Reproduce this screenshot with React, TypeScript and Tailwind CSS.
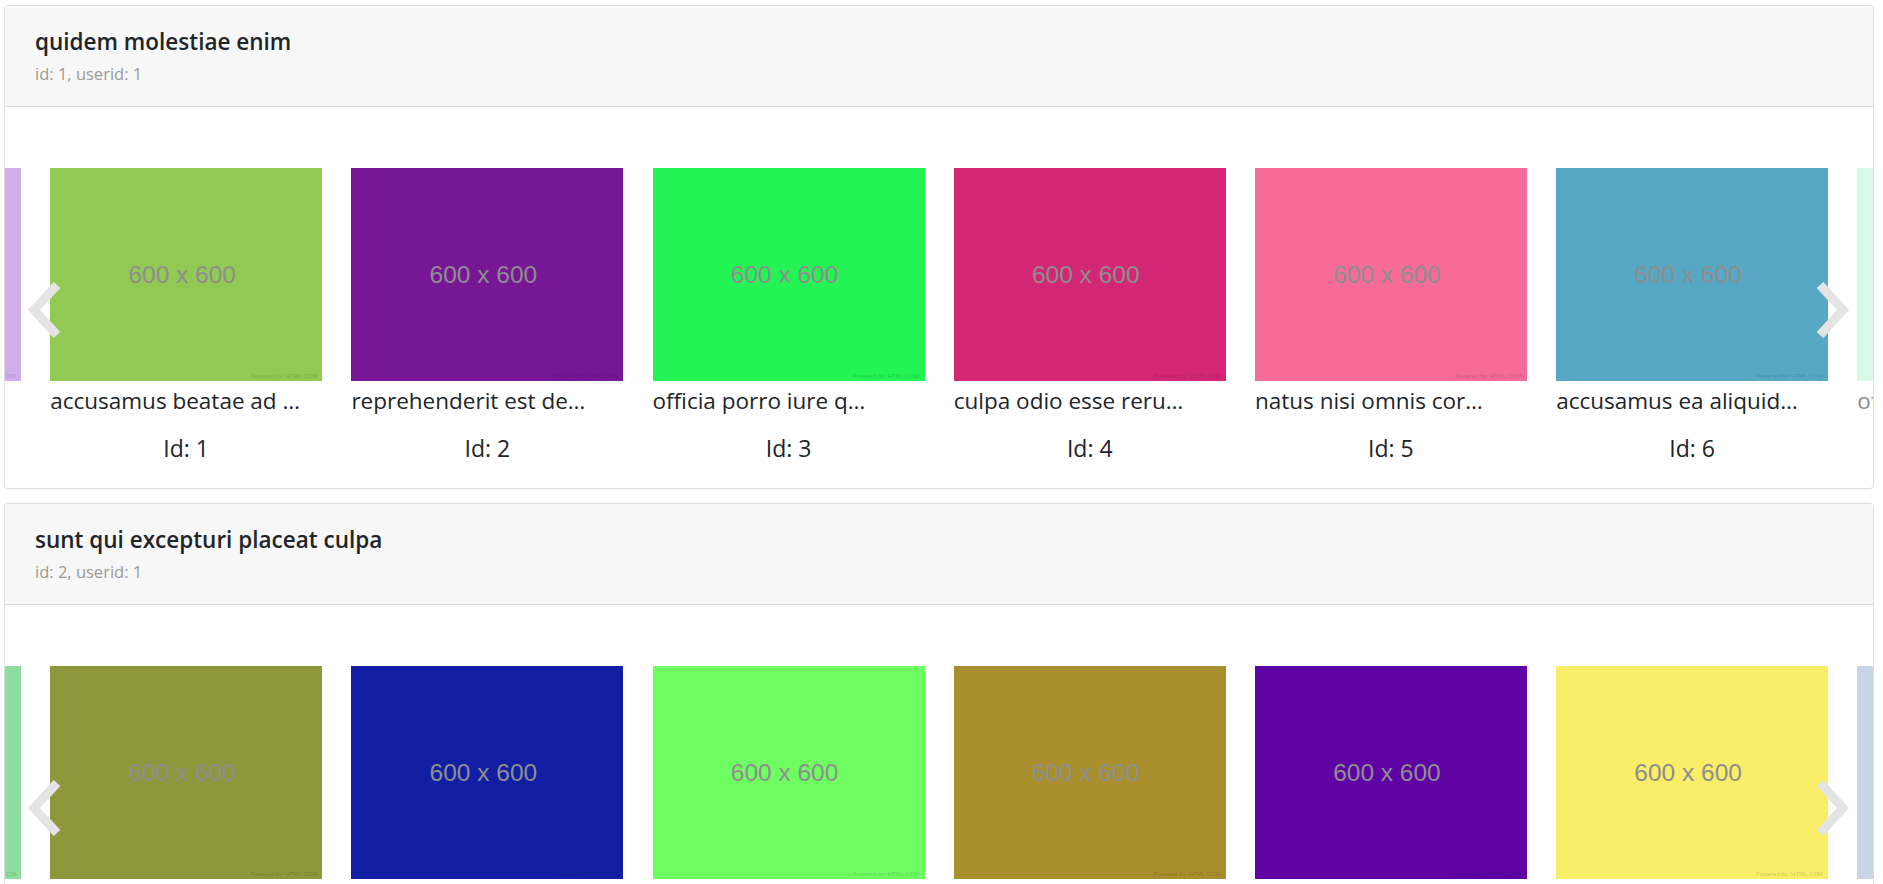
import React from 'react';

interface Slide {
    id: number;
    color: string;
    title: string;
    partial?: boolean;
}

interface Album {
    id: number;
    userId: number;
    title: string;
    slides: Slide[];
}

const albums: Album[] = [
    {
        id: 1,
        userId: 1,
        title: 'quidem molestiae enim',
        slides: [
            { id: 50, color: '#cfaeea', title: 'et inventore quae ut…', partial: true },
            { id: 1, color: '#92c952', title: 'accusamus beatae ad …' },
            { id: 2, color: '#771796', title: 'reprehenderit est de…' },
            { id: 3, color: '#24f355', title: 'officia porro iure q…' },
            { id: 4, color: '#d32776', title: 'culpa odio esse reru…' },
            { id: 5, color: '#f66b97', title: 'natus nisi omnis cor…' },
            { id: 6, color: '#56a8c5', title: 'accusamus ea aliquid…' },
            { id: 7, color: '#d9f9e6', title: 'officia delectus co…', partial: true },
        ],
    },
    {
        id: 2,
        userId: 1,
        title: 'sunt qui excepturi placeat culpa',
        slides: [
            { id: 100, color: '#8cdd9e', title: 'in quasi nam ut quos…', partial: true },
            { id: 51, color: '#8e973b', title: 'non sunt voluptatem …' },
            { id: 52, color: '#121fa4', title: 'eveniet pariatur qui…' },
            { id: 53, color: '#6efe62', title: 'soluta et harum aliq…' },
            { id: 54, color: '#a98e2e', title: 'ut ex quibusdam dign…' },
            { id: 55, color: '#5f03a5', title: 'voluptatem consequat…' },
            { id: 56, color: '#f8ee68', title: 'eos ab consequuntur …' },
            { id: 57, color: '#c9d5e6', title: 'qui quae sed quidem …', partial: true },
        ],
    },
];

function Chevron({ dir }: { dir: 'left' | 'right' }) {
    const pts = dir === 'left' ? '32,3 9,28 32,53' : '4,3 27,28 4,53';
    return (
        <svg width="36" height="56" viewBox="0 0 36 56">
            <polyline points={pts} fill="none" stroke="#e4e4e4" strokeWidth="9" />
        </svg>
    );
}

function SlideItem({ slide }: { slide: Slide }) {
    return (
        <div className="w-[272px] shrink-0">
            <div className="relative h-[213px] flex items-center justify-center pr-[8px] pt-[2px]" style={{ backgroundColor: slide.color }}>
                <span className="text-[24.5px] text-[#8e8e8e] font-['Liberation_Sans',Arial,sans-serif]">600 x 600</span>
                <span className="absolute right-[5px] bottom-[2px] text-[6px] leading-none text-black/20 font-['Liberation_Sans',Arial,sans-serif]">
                    Powered by: HTML.COM
                </span>
            </div>
            <p className={`mt-[5px] text-[22.5px] leading-[30px] whitespace-nowrap ${slide.partial ? 'text-[#8a8a8a]' : 'text-[#212529]'}`}>
                {slide.title}
            </p>
            <p className="mt-[17px] text-[23px] leading-[30px] text-center text-[#212529]">Id: {slide.id}</p>
        </div>
    );
}

function AlbumCard({ album }: { album: Album }) {
    return (
        <div className="w-[1870px] mb-[14px] border border-[#dedede] rounded-[4px] bg-white overflow-hidden">
            <div className="h-[101px] bg-[#f7f7f7] border-b border-[#dcdcdc] px-[30px] pt-[22px]">
                <h5 className="text-[22.5px] leading-[28px] font-semibold text-[#212529]">{album.title}</h5>
                <p className="mt-[7px] text-[16.5px] leading-[22px] text-[#9a9a9a]">
                    id: {album.id}, userid: {album.userId}
                </p>
            </div>
            <div className="relative pt-[61px] pb-[25px] overflow-hidden">
                <div className="flex gap-[29.2px] ml-[-256px]">
                    {album.slides.map(s => (
                        <SlideItem key={s.id} slide={s} />
                    ))}
                </div>
                <div className="absolute left-[20px] top-[175px]">
                    <Chevron dir="left" />
                </div>
                <div className="absolute left-[1811px] top-[175px]">
                    <Chevron dir="right" />
                </div>
            </div>
        </div>
    );
}

export default function App() {
    return (
        <div className="min-h-screen bg-white pl-[4px] pt-[5px] font-['Open_Sans','Noto_Sans',sans-serif]">
            {albums.map(a => (
                <AlbumCard key={a.id} album={a} />
            ))}
        </div>
    );
}
